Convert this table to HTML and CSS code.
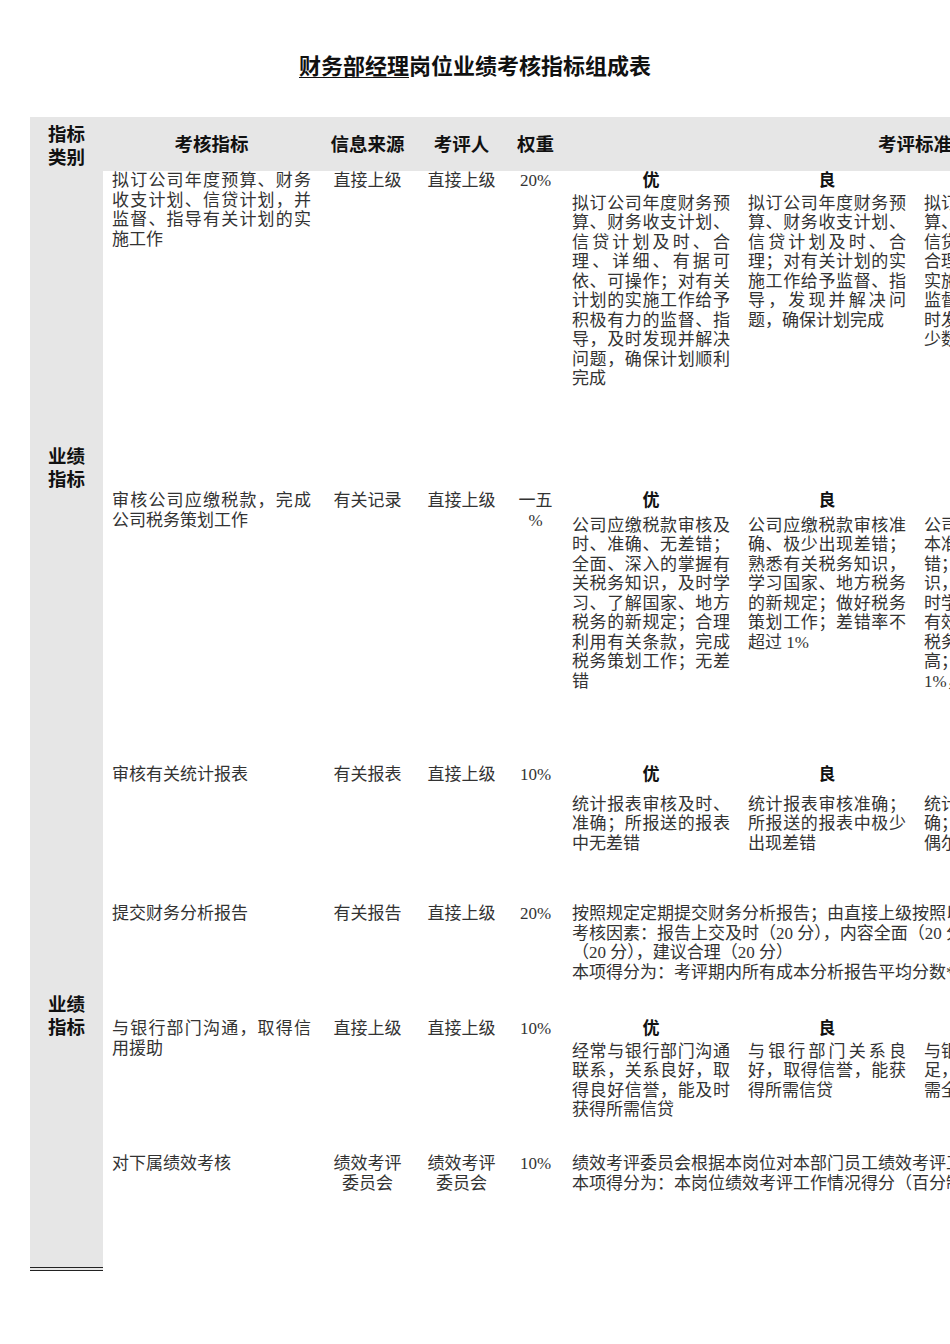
FILE: index.html
```html
<!DOCTYPE html>
<html lang="zh-CN">
<head>
<meta charset="utf-8">
<title>财务部经理岗位业绩考核指标组成表</title>
<link rel="stylesheet" href="styles.css">
</head>
<body>
<div class="page">
  <h1 class="title"><span class="u">财务部经理</span>岗位业绩考核指标组成表</h1>
  <table class="kpi">
    <colgroup>
      <col class="c-cat"><col class="c-item"><col class="c-src"><col class="c-rev"><col class="c-wt">
      <col class="c-grade"><col class="c-grade"><col class="c-grade"><col class="c-grade">
    </colgroup>
    <thead>
      <tr class="head">
        <th class="cat">指标类别</th>
        <th>考核指标</th>
        <th>信息来源</th>
        <th>考评人</th>
        <th>权重</th>
        <th colspan="4">考评标准</th>
      </tr>
    </thead>
    <tbody>
      <tr class="r1">
        <td class="cat" rowspan="2">业绩指标</td>
        <td class="item">拟订公司年度预算、财务收支计划、信贷计划，并监督、指导有关计划的实施工作</td>
        <td class="ctr">直接上级</td>
        <td class="ctr">直接上级</td>
        <td class="ctr">20%</td>
        <td><div class="grade g1">优</div><div class="desc">拟订公司年度财务预算、财务收支计划、信贷计划及时、合理、详细、有据可依、可操作；对有关计划的实施工作给予积极有力的监督、指导，及时发现并解决问题，确保计划顺利完成</div></td>
        <td><div class="grade g1">良</div><div class="desc">拟订公司年度财务预算、财务收支计划、信贷计划及时、合理；对有关计划的实施工作给予监督、指导，发现并解决问题，确保计划完成</div></td>
        <td><div class="grade g1">中</div><div class="desc">拟订公司年度财务预<br>算、财务收支计划、<br>信贷计划基本及时、<br>合理；对有关计划的<br>实施工作给予一定的<br>监督、指导，能够及<br>时发现并解决问题，<br>少数问题未能解决</div></td>
        <td><div class="grade g1">差</div><div class="desc">拟订公司年度财务预算、财务收支计划、信贷计划不及时、不合理；对有关计划的实施工作缺乏监督、指导，问题不能及时解决</div></td>
      </tr>
      <tr class="r2">
        <td class="item">审核公司应缴税款，完成公司税务策划工作</td>
        <td class="ctr">有关记录</td>
        <td class="ctr">直接上级</td>
        <td class="ctr">一五<br>%</td>
        <td><div class="grade g2">优</div><div class="desc">公司应缴税款审核及时、准确、无差错；全面、深入的掌握有关税务知识，及时学习、了解国家、地方税务的新规定；合理利用有关条款，完成税务策划工作；无差错</div></td>
        <td><div class="grade g2">良</div><div class="desc">公司应缴税款审核准确、极少出现差错；熟悉有关税务知识，学习国家、地方税务的新规定；做好税务策划工作；差错率不超过 1%</div></td>
        <td><div class="grade g2">中</div><div class="desc">公司应缴税款审核基<br>本准确，偶尔出现差<br>错；了解有关税务知<br>识，基本能够做到及<br>时学习新的税务规定<br>有效利用有关条款，<br>税务策划工作差错较<br>高；差错率不超过<br>1%，但不超过 3%</div></td>
        <td><div class="grade g2">差</div><div class="desc">公司应缴税款审核经常出现差错；不了解有关税务知识；税务策划工作差错率超过 3%</div></td>
      </tr>
      <tr class="r3">
        <td class="cat" rowspan="4">业绩指标</td>
        <td class="item">审核有关统计报表</td>
        <td class="ctr">有关报表</td>
        <td class="ctr">直接上级</td>
        <td class="ctr">10%</td>
        <td><div class="grade g3">优</div><div class="desc">统计报表审核及时、准确；所报送的报表中无差错</div></td>
        <td><div class="grade g3">良</div><div class="desc">统计报表审核准确；所报送的报表中极少出现差错</div></td>
        <td><div class="grade g3">中</div><div class="desc">统计报表审核基本准<br>确；所报送的报表中<br>偶尔出现差错</div></td>
        <td><div class="grade g3">差</div><div class="desc">统计报表审核不准确；所报送的报表中经常出现差错</div></td>
      </tr>
      <tr class="r4">
        <td class="item">提交财务分析报告</td>
        <td class="ctr">有关报告</td>
        <td class="ctr">直接上级</td>
        <td class="ctr">20%</td>
        <td colspan="4"><div class="wide">按照规定定期提交财务分析报告；由直接上级按照以下标准进行评分（满分为 100 分）<br>考核因素：报告上交及时（20 分），内容全面（20 分），分析深入（20 分），数据准确<br>（20 分），建议合理（20 分）<br>本项得分为：考评期内所有成本分析报告平均分数*20%</div></td>
      </tr>
      <tr class="r5">
        <td class="item">与银行部门沟通，取得信用援助</td>
        <td class="ctr">直接上级</td>
        <td class="ctr">直接上级</td>
        <td class="ctr">10%</td>
        <td><div class="grade g1">优</div><div class="desc">经常与银行部门沟通联系，关系良好，取得良好信誉，能及时获得所需信贷</div></td>
        <td><div class="grade g1">良</div><div class="desc">与银行部门关系良好，取得信誉，能获得所需信贷</div></td>
        <td><div class="grade g1">中</div><div class="desc">与银行部门联系不<br>足，基本能获得所<br>需全部信贷</div></td>
        <td><div class="grade g1">差</div><div class="desc">与银行部门关系不好，不能获得所需信贷</div></td>
      </tr>
      <tr class="r6">
        <td class="item">对下属绩效考核</td>
        <td class="ctr">绩效考评<br>委员会</td>
        <td class="ctr">绩效考评<br>委员会</td>
        <td class="ctr">10%</td>
        <td colspan="4"><div class="wide">绩效考评委员会根据本岗位对本部门员工绩效考评工作情况进行评分<br>本项得分为：本岗位绩效考评工作情况得分（百分制）*10%</div></td>
      </tr>
    </tbody>
  </table>
</div>
</body>
</html>
```

FILE: styles.css
```css
html, body {
  margin: 0;
  padding: 0;
  background: #ffffff;
}

.page {
  width: 950px;
  height: 1344px;
  overflow: hidden;
  font-family: "Liberation Serif", "Noto Sans CJK SC", serif;
  color: #333333;
}

.title {
  margin: 52px 0 0;
  height: 30px;
  line-height: 30px;
  font-family: "Liberation Sans", "Noto Sans CJK SC", sans-serif;
  font-size: 22px;
  font-weight: bold;
  color: #111111;
  text-align: center;
}

.title .u {
  text-decoration: underline;
  text-underline-offset: 3px;
  text-decoration-thickness: 1px;
}

.kpi {
  margin: 35px 0 0 30px;
  width: 1237px;
  table-layout: fixed;
  border-collapse: separate;
  border-spacing: 0;
  font-size: 17px;
  line-height: 19.5px;
}

.c-cat { width: 73px; }
.c-item { width: 217px; }
.c-src { width: 95px; }
.c-rev { width: 93px; }
.c-wt { width: 55px; }
.c-grade { width: 176px; }

.head th {
  height: 51px;
  padding: 0;
  background: #e6e6e6;
  font-family: "Liberation Sans", "Noto Sans CJK SC", sans-serif;
  font-size: 18.5px;
  line-height: 23px;
  font-weight: bold;
  color: #111111;
  text-align: center;
  vertical-align: middle;
}

.head th.cat {
  padding: 3px 10px 0;
}

td {
  padding: 0 9px;
  vertical-align: top;
}

td.cat {
  padding: 0 10px;
  background: #e6e6e6;
  font-family: "Liberation Sans", "Noto Sans CJK SC", sans-serif;
  font-size: 18.5px;
  line-height: 23px;
  font-weight: bold;
  color: #111111;
  text-align: center;
  vertical-align: middle;
}

.r3 td.cat {
  border-bottom: 4px double #222222;
}

td.item {
  text-align: justify;
}

td.ctr {
  padding-left: 5px;
  padding-right: 5px;
  text-align: center;
}

.grade {
  font-family: "Liberation Sans", "Noto Sans CJK SC", sans-serif;
  font-weight: bold;
  font-size: 17px;
  color: #111111;
  text-align: center;
}

.g1 { margin-bottom: 3px; }
.g2 { margin-bottom: 5px; }
.g3 { margin-bottom: 10px; }

.desc {
  text-align: justify;
}

.wide {
  white-space: nowrap;
}

.r1 { height: 320px; }
.r2 { height: 274px; }
.r3 { height: 139px; }
.r4 { height: 115px; }
.r5 { height: 135px; }
.r6 { height: 117px; }
```
